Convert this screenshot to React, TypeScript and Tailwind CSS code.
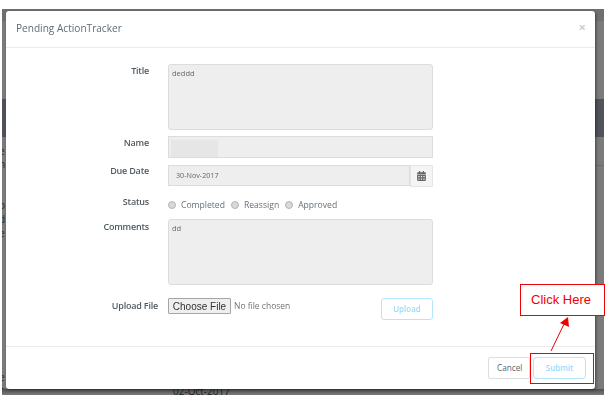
import React from 'react';
import { FaCalendarAlt } from 'react-icons/fa';

const OPEN = "font-['Open_Sans',sans-serif]";

function Label({ children, className = 'w-[143px]' }: { children: React.ReactNode; className?: string }) {
  return (
    <div className={`text-right text-[9px] tracking-[-0.2px] leading-[13px] font-semibold text-[#4f5b63] ${className}`}>
      {children}
    </div>
  );
}

function Radio({ label }: { label: string }) {
  return (
    <span className="flex items-center gap-[5px]">
      <span className="w-[8px] h-[8px] rounded-full bg-[#d9d9d9] border border-[#b4b4b4]" />
      <span className="text-[8.6px] text-[#64707a]">{label}</span>
    </span>
  );
}

export default function App() {
  return (
    <div className={`relative w-[610px] h-[403px] bg-white overflow-hidden ${OPEN}`}>
      {/* page behind the dialog */}
      <div className="absolute left-[2px] top-[9px] w-[602px] h-[386px] bg-[#7b7b7b] overflow-hidden">
        <div className="absolute left-0 right-0 top-0 h-[12px] bg-[#707070]" />
        <div className="absolute left-0 right-0 top-[90px] h-[38px] bg-[#505359]" />
        <div className="absolute left-0 right-0 top-[156px] h-px bg-[#6c6c6c]" />
        <div className="absolute left-[-3px] top-[136px] text-[10px] leading-[13px] text-[#2a2a2a]">
          <div>e</div>
          <div>n</div>
        </div>
        <div className="absolute left-[-3px] top-[189px] text-[10px] leading-[14px] text-[#2a2a2a]">
          <div>o</div>
          <div>d</div>
          <div>e</div>
        </div>
        <div className="absolute left-[-3px] top-[362px] text-[10px] leading-[13px] text-[#2a2a2a]">
          <div>e</div>
          <div>nd</div>
        </div>
        <div className="absolute left-0 right-0 top-[380px] h-[6px] bg-gradient-to-b from-[#4e4e4e] to-[#7b7b7b]" />
        <div className="absolute left-[171px] top-[376px] text-[10px] leading-[13px] text-[#222]">02-Oct-2017</div>
      </div>

      {/* dialog */}
      <div className="relative pt-[11px] pl-[6px]">
        <div className="w-[589px] h-[378px] bg-white rounded-[3px] flex flex-col shadow-[1px_1px_3px_rgba(0,0,0,0.45)]">
          <div className="h-[37px] shrink-0 border-b border-[#e9ecef] pl-[10px] pr-[9px] flex items-center justify-between">
            <span className="text-[10.1px] text-[#5f6c76] blur-[0.3px]">Pending ActionTracker</span>
            <span className="text-[13px] font-bold leading-none text-[#d0d0d0] -mt-[4px]">×</span>
          </div>

          <div className="flex-1 pt-[16px] flex flex-col blur-[0.3px]">
            <div className="flex">
              <Label className="w-[143px]">Title</Label>
              <div className="ml-[19px] w-[265px] h-[66px] bg-[#eeeeee] border border-[#dcdcdc] rounded-[3px] px-[3px] pt-[3px] text-[7.5px] leading-[10px] text-[#666]">
                deddd
              </div>
            </div>

            <div className="flex mt-[6px]">
              <Label>Name</Label>
              <div className="ml-[19px] w-[265px] h-[22px] bg-[#eeeeee] border border-[#dcdcdc] pt-[3px] pl-[2px]">
                <div className="w-[47px] h-[17px] bg-[#e6e6e6]" />
              </div>
            </div>

            <div className="flex mt-[7px]">
              <Label className="w-[143px] -mt-[1px]">Due Date</Label>
              <div className="ml-[19px] w-[265px] h-[22px] flex">
                <div className="w-[242px] h-[21px] bg-[#eeeeee] border border-[#dcdcdc] pl-[7px] flex items-center text-[7.2px] text-[#666]">
                  30-Nov-2017
                </div>
                <div className="w-[23px] h-[22px] bg-[#f4f4f4] border border-[#e6e6e6] flex items-center justify-center text-[#666]">
                  <FaCalendarAlt className="w-[9px] h-[10px]" />
                </div>
              </div>
            </div>

            <div className="flex mt-[8px]">
              <Label>Status</Label>
              <div className="ml-[19px] flex items-center gap-[6px] h-[13px] mt-[4px]">
                <Radio label="Completed" />
                <Radio label="Reassign" />
                <Radio label="Approved" />
              </div>
            </div>

            <div className="flex mt-[7px]">
              <Label className="w-[143px] pt-[1px]">Comments</Label>
              <div className="ml-[19px] w-[265px] h-[66px] bg-[#eeeeee] border border-[#dcdcdc] rounded-[3px] px-[3px] pt-[3px] text-[7.5px] leading-[10px] text-[#666]">
                dd
              </div>
            </div>

            <div className="flex mt-[13px]">
              <Label className="w-[152px] pt-[1px]">Upload File</Label>
              <div className="ml-[10px] w-[265px] flex justify-between items-start">
                <div className="flex items-center">
                  <span className="w-[63px] h-[16px] bg-[#efefef] border border-[#a6a6a6] rounded-[1px] flex items-center justify-center font-['Liberation_Sans',sans-serif] text-[10px] text-[#333]">
                    Choose File
                  </span>
                  <span className="ml-[3px] text-[8.5px] text-[#757575]">No file chosen</span>
                </div>
                <span className="w-[52px] h-[22px] border border-[#b5e6fc] rounded-[3px] flex items-center justify-center text-[8px] font-semibold text-[#9bdafa]">
                  Upload
                </span>
              </div>
            </div>
          </div>

          <div className="h-[43px] shrink-0 border-t border-[#e9ecef] pt-[10px] pr-[9px] flex justify-end gap-[3px]">
            <span className="w-[42px] h-[22px] border border-[#dedede] rounded-[2px] pl-[8px] flex items-center text-[8.2px] text-[#58666e]">
              Cancel
            </span>
            <span className="w-[53px] h-[22px] border border-[#b5e6fc] rounded-[3px] flex items-center justify-center text-[8px] font-semibold text-[#9bdafa]">
              Submit
            </span>
          </div>
        </div>
      </div>

      {/* annotation */}
      <div className="absolute left-[520px] top-[284px] w-[85px] h-[32px] bg-white border border-[#f00000] pl-[10px] flex items-center font-['Liberation_Sans',sans-serif] text-[13px] text-[#f00000]">
        Click Here
      </div>
      <div className="absolute left-[530px] top-[353px] w-[64px] h-[31px] border border-[#f00000]" />
      <svg className="absolute left-[545px] top-[312px]" width="30" height="42" viewBox="0 0 30 42">
        <line x1="6" y1="39" x2="19" y2="12" stroke="#f00000" strokeWidth="1" />
        <polygon points="23,5 24,15 15,11" fill="#f00000" />
      </svg>
    </div>
  );
}
